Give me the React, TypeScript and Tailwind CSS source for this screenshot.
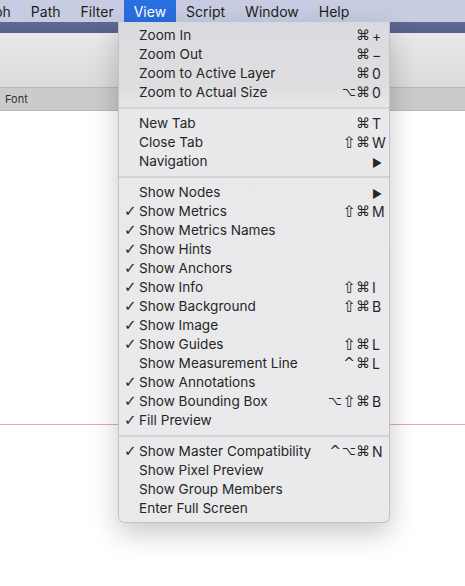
import React from 'react';

type Item = {
  label: string;
  checked?: boolean;
  mods?: string[];
  keyChar?: string;
  submenu?: boolean;
};

const groups: Item[][] = [
  [
    { label: 'Zoom In', mods: ['⌘'], keyChar: '+' },
    { label: 'Zoom Out', mods: ['⌘'], keyChar: '−' },
    { label: 'Zoom to Active Layer', mods: ['⌘'], keyChar: '0' },
    { label: 'Zoom to Actual Size', mods: ['⌥', '⌘'], keyChar: '0' },
  ],
  [
    { label: 'New Tab', mods: ['⌘'], keyChar: 'T' },
    { label: 'Close Tab', mods: ['⇧', '⌘'], keyChar: 'W' },
    { label: 'Navigation', submenu: true },
  ],
  [
    { label: 'Show Nodes', submenu: true },
    { label: 'Show Metrics', checked: true, mods: ['⇧', '⌘'], keyChar: 'M' },
    { label: 'Show Metrics Names', checked: true },
    { label: 'Show Hints', checked: true },
    { label: 'Show Anchors', checked: true },
    { label: 'Show Info', checked: true, mods: ['⇧', '⌘'], keyChar: 'I' },
    { label: 'Show Background', checked: true, mods: ['⇧', '⌘'], keyChar: 'B' },
    { label: 'Show Image', checked: true },
    { label: 'Show Guides', checked: true, mods: ['⇧', '⌘'], keyChar: 'L' },
    { label: 'Show Measurement Line', mods: ['^', '⌘'], keyChar: 'L' },
    { label: 'Show Annotations', checked: true },
    { label: 'Show Bounding Box', checked: true, mods: ['⌥', '⇧', '⌘'], keyChar: 'B' },
    { label: 'Fill Preview', checked: true },
  ],
  [
    { label: 'Show Master Compatibility', checked: true, mods: ['^', '⌥', '⌘'], keyChar: 'N' },
    { label: 'Show Pixel Preview' },
    { label: 'Show Group Members' },
    { label: 'Enter Full Screen' },
  ],
];

const menus = ['Path', 'Filter', 'View', 'Script', 'Window', 'Help'];

// modifier glyph sizes differ a bit in DejaVu, so tune each one
function modClass(m: string) {
  const base = "inline-block w-[14px] overflow-hidden text-center font-['DejaVu_Sans',sans-serif] leading-[19px]";
  if (m === '⌥') return `${base} text-[12px]`;
  if (m === '⇧') return `${base} text-[16px]`;
  return `${base} text-[14px]`;
}

function MenuRow({ item }: { item: Item }) {
  return (
    <div className="flex h-[19px] items-center text-[13.6px] text-[#262626]">
      <span className="w-[20px] pl-[5px] font-['DejaVu_Sans',sans-serif] text-[15px] font-bold leading-none">
        {item.checked ? '✓' : ''}
      </span>
      <span>{item.label}</span>
      <span className="ml-auto flex h-[19px] items-center">
        {item.mods?.map((m, i) => (
          <span key={i} className={modClass(m)}>
            {m}
          </span>
        ))}
        <span className="inline-block w-[19px] pl-[2px] text-left text-[14px]">
          {item.submenu ? <span className="text-[11px]">▶</span> : item.keyChar}
        </span>
      </span>
    </div>
  );
}

export default function App() {
  return (
    <div className="relative h-[586px] w-[465px] overflow-hidden bg-white font-['Inter',sans-serif]">
      <div className="flex h-[22px] items-center bg-[#c8cce2] text-[14px] text-[#1e1e1e]">
        <span className="-ml-[6px] pr-[10px]">ph</span>
        {menus.map((m) => (
          <span
            key={m}
            className={
              m === 'View'
                ? 'flex h-[22px] items-center bg-[#2a6fdf] px-[10px] text-white'
                : 'flex h-[22px] items-center px-[10px]'
            }
          >
            {m}
          </span>
        ))}
      </div>
      <div className="h-[11px] bg-gradient-to-b from-[#5f6994] to-[#57608a]" />
      <div className="h-[54px] bg-gradient-to-b from-[#e9e9e9] to-[#dadada]" />
      <div className="flex h-[24px] items-center border-y border-[#b9b9b9] bg-[#cbcbcb] pl-[5px] text-[11px] text-[#333]">
        Font
      </div>
      <div className="mt-[313px] h-[1px] bg-[#e9a6a6]" />

      <div className="absolute left-[118px] top-[22px] w-[272px] rounded-b-[6px] border-x border-b border-[#c2c2c4] bg-[linear-gradient(#d8d9df_0px,#dcdce0_11px,#dedee1_64px,#e9e9eb_90px,#eaeaec_100%)] pb-[4px] pt-[4px] shadow-[0_10px_28px_rgba(0,0,0,0.22)]">
        {groups.map((g, gi) => (
          <div key={gi}>
            {gi > 0 && (
              <div className="flex h-[12px] items-center">
                <div className="h-[2px] w-full bg-[#d4d4d7]" />
              </div>
            )}
            {g.map((it) => (
              <MenuRow key={it.label} item={it} />
            ))}
          </div>
        ))}
      </div>
    </div>
  );
}
